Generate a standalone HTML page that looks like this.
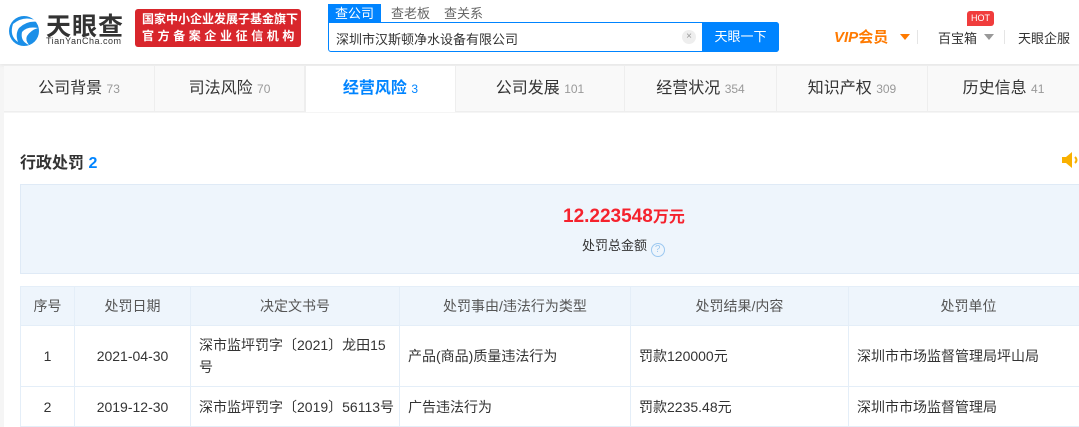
<!DOCTYPE html>
<html><head><meta charset="utf-8"><style>
*{margin:0;padding:0;box-sizing:border-box}
body{width:1079px;height:427px;overflow:hidden;background:#f5f5f5;font-family:"Liberation Sans","Noto Sans CJK SC",sans-serif;color:#333;position:relative}
.abs{position:absolute}
#hdr{left:0;top:0;width:1079px;height:64px;background:#fff;box-shadow:0 1px 4px rgba(0,0,0,.08)}
.tabs{left:4px;top:66px;width:1075px;height:46px;background:#f9f9f9;border-bottom:1px solid #eee}
.tab{position:absolute;top:0;height:46px;line-height:46px;text-align:center;font-size:16px;color:#333;border-right:1px solid #eee}
.tab span{font-size:12px;color:#999}
.tab.on{background:#fff;color:#0084ff;font-weight:bold;border-left:1px solid #eee}
.tab.on span{color:#0084ff;font-weight:normal}
#main{left:4px;top:113px;width:1075px;height:314px;background:#fff}
table{position:absolute;left:20px;top:286px;border-collapse:collapse;font-size:14px;color:#333;table-layout:fixed;width:1068px}
td,th{border:1px solid #e4eef8;font-weight:normal;text-align:center}
th{background:#eef5fc;height:39px;color:#555}
td.l{text-align:left;padding-left:8px}
</style></head><body>
<div id="hdr" class="abs">
 <svg class="abs" style="left:5px;top:12px" width="40" height="36" viewBox="0 0 40 36">
  <circle cx="19" cy="19" r="15" fill="#1b8fe8"/>
  <path d="M8 12 Q20 2 34 10 Q22 8 14 16 Q10 22 13 30 Q4 24 8 12Z" fill="#fff"/>
  <path d="M17 20 Q22 14 33 16 Q26 18 22 24 Q20 28 24 33 Q15 29 17 20Z" fill="#fff"/>
 </svg>
 <div class="abs" style="left:46px;top:7px;font-size:25px;font-weight:bold;color:#333;letter-spacing:1px">天眼查</div>
 <div class="abs" style="left:46px;top:36px;font-size:9px;color:#333;letter-spacing:.5px">TianYanCha.com</div>
 <div class="abs" style="left:135px;top:9px;width:166px;height:38px;background:#d8262c;border-radius:3px;color:#fff;font-size:12px;font-weight:bold;line-height:17px;padding:2px 0 0 7px;white-space:nowrap;overflow:hidden">国家中小企业发展子基金旗下<br><span style="letter-spacing:3.6px">官方备案企业征信机构</span></div>
 <div class="abs" style="left:328px;top:4px;width:53px;height:19px;background:#0084ff;color:#fff;font-size:13px;text-align:center;line-height:19px">查公司</div>
 <div class="abs" style="left:391px;top:4px;font-size:13px;color:#666;line-height:19px">查老板</div>
 <div class="abs" style="left:444px;top:4px;font-size:13px;color:#666;line-height:19px">查关系</div>
 <div class="abs" style="left:328px;top:22px;width:451px;height:30px;border:1px solid #0084ff;border-radius:0 3px 3px 3px;background:#fff"></div>
 <div class="abs" style="left:336px;top:29px;font-size:13px;color:#333">深圳市汉斯顿净水设备有限公司</div>
 <div class="abs" style="left:682px;top:30px;width:14px;height:14px;border-radius:50%;background:#eee;color:#999;font-size:10px;text-align:center;line-height:14px">×</div>
 <div class="abs" style="left:702px;top:22px;width:77px;height:30px;background:#0084ff;color:#fff;font-size:13px;text-align:center;line-height:30px;border-radius:0 3px 3px 0">天眼一下</div>
 <div class="abs" style="left:834px;top:26px;font-size:15px;font-weight:bold;color:#ff7a00;font-style:italic">VIP<span style="font-style:normal">会员</span></div>
 <div class="abs" style="left:900px;top:34px;border:5px solid transparent;border-top:6px solid #ff7a00"></div>
 <div class="abs" style="left:917px;top:30px;width:1px;height:14px;background:#e5e5e5"></div>
 <div class="abs" style="left:938px;top:28px;font-size:13px;color:#333">百宝箱</div>
 <div class="abs" style="left:984px;top:34px;border:5px solid transparent;border-top:6px solid #999"></div>
 <div class="abs" style="left:967px;top:11px;width:27px;height:15px;background:#f03c3c;border-radius:3px 3px 3px 0;color:#fff;font-size:9px;text-align:center;line-height:15px">HOT</div>
 <div class="abs" style="left:1004px;top:30px;width:1px;height:14px;background:#e5e5e5"></div>
 <div class="abs" style="left:1018px;top:28px;font-size:13px;color:#333;white-space:nowrap">天眼企服</div>
</div>
<div class="abs tabs">
 <div class="tab" style="left:0;width:151px">公司背景 <span>73</span></div>
 <div class="tab" style="left:151px;width:150px">司法风险 <span>70</span></div>
 <div class="tab on" style="left:301px;width:151px">经营风险 <span>3</span></div>
 <div class="tab" style="left:452px;width:169px">公司发展 <span>101</span></div>
 <div class="tab" style="left:621px;width:152px">经营状况 <span>354</span></div>
 <div class="tab" style="left:773px;width:151px">知识产权 <span>309</span></div>
 <div class="tab" style="left:924px;width:151px;border-right:none">历史信息 <span>41</span></div>
</div>
<div id="main" class="abs"></div>
<div class="abs" style="left:20px;top:149px;font-size:16px;font-weight:bold;color:#333">行政处罚 <span style="color:#0084ff">2</span></div>
<svg class="abs" style="left:1061px;top:151px" width="18" height="18" viewBox="0 0 18 18"><path d="M1 6h4l6-5v16l-6-5H1z" fill="#f9b000"/><path d="M14 6q3 3 0 6" stroke="#f9b000" stroke-width="2" fill="none"/></svg>
<div class="abs" style="left:20px;top:184px;width:1070px;height:90px;background:#eef5fc;border:1px solid #dfeaf6"></div>
<div class="abs" style="left:563px;top:203px;font-size:19px;font-weight:bold;color:#f5222d">12.223548<span style="font-size:16px">万元</span></div>
<div class="abs" style="left:582px;top:235px;font-size:13px;color:#333">处罚总金额 <span style="display:inline-block;width:14px;height:14px;border:1px solid #9cc8f0;border-radius:50%;color:#9cc8f0;font-size:10px;text-align:center;line-height:12px;vertical-align:-2px">?</span></div>
<table>
<colgroup><col style="width:54px"><col style="width:116px"><col style="width:209px"><col style="width:231px"><col style="width:218px"><col style="width:240px"></colgroup>
<tr><th>序号</th><th>处罚日期</th><th>决定文书号</th><th>处罚事由/违法行为类型</th><th>处罚结果/内容</th><th>处罚单位</th></tr>
<tr style="height:61px"><td>1</td><td>2021-04-30</td><td class="l" style="line-height:22px;padding-right:1px">深市监坪罚字〔2021〕龙田15&#8203;号</td><td class="l">产品(商品)质量违法行为</td><td class="l">罚款120000元</td><td class="l">深圳市市场监督管理局坪山局</td></tr>
<tr style="height:40px"><td>2</td><td>2019-12-30</td><td class="l" style="white-space:nowrap">深市监坪罚字〔2019〕56113号</td><td class="l">广告违法行为</td><td class="l">罚款2235.48元</td><td class="l">深圳市市场监督管理局</td></tr>
</table>
</body></html>
